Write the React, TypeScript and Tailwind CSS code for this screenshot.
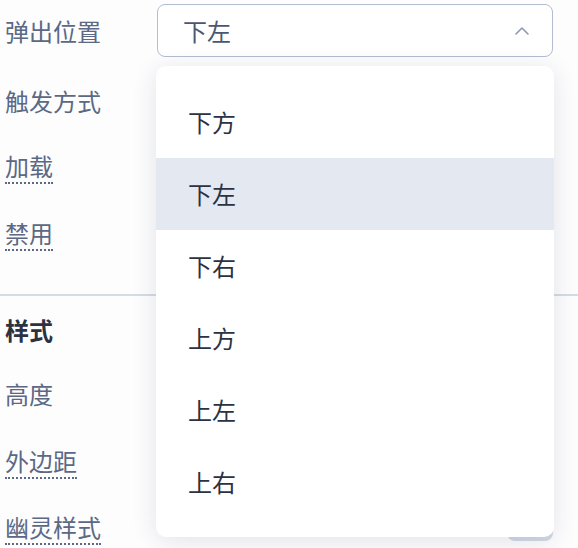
const options = ["下方", "下左", "下右", "上方", "上左", "上右"]

const Label = ({ text, dotted }: { text: string; dotted?: boolean }) => (
  <span
    className={
      dotted
        ? "inline-block self-start ml-[5px] h-[34px] text-[24px] leading-[32px] text-[#5b6985] border-b-2 border-dotted border-[#5b6985]"
        : "inline-block self-start ml-[5px] h-[32px] text-[24px] leading-[32px] text-[#5b6985]"
    }
  >
    {text}
  </span>
)

export default function App() {
  const selected = "下左"

  return (
    <div
      className="relative w-[578px] h-[548px] overflow-hidden bg-[#fdfdfe]"
      style={{ fontFamily: '"Noto Sans CJK SC", "Noto Sans", sans-serif' }}
    >
      <div className="flex flex-col">
        <div className="mt-[4px] flex h-[53px] items-center pr-[25px]">
          <span className="ml-[5px] w-[152px] text-[24px] leading-[32px] text-[#5b6985]">弹出位置</span>
          <div className="flex h-[53px] flex-1 items-center justify-between rounded-[8px] border-[1.5px] border-[#b3bdd1] bg-white pl-[25px] pr-[22px]">
            <span className="text-[24px] leading-[32px] text-[#4a5772]">{selected}</span>
            <svg width="16" height="10" viewBox="0 0 16 10" fill="none">
              <path d="M2 8 L8 2 L14 8" stroke="#8c99b0" strokeWidth="1.6" strokeLinecap="round" strokeLinejoin="round" />
            </svg>
          </div>
        </div>

        <div className="mt-[28px] flex">
          <Label text="触发方式" />
        </div>
        <div className="mt-[33px] flex">
          <Label text="加载" dotted />
        </div>
        <div className="mt-[33px] flex">
          <Label text="禁用" dotted />
        </div>

        <div className="mt-[43px] h-[2px] w-full bg-[#d5dae6]" />

        <div className="mt-[18px] flex">
          <span className="ml-[5px] h-[32px] text-[24px] font-bold leading-[32px] text-[#2b3242]">样式</span>
        </div>
        <div className="mt-[32px] flex">
          <Label text="高度" />
        </div>
        <div className="mt-[35px] flex">
          <Label text="外边距" dotted />
        </div>
        <div className="mt-[32px] flex items-start justify-between pr-[25px]">
          <Label text="幽灵样式" dotted />
          <div className="h-[30px] w-[46px] rounded-[8px] bg-[#d3d9e5]" />
        </div>
      </div>

      <div className="absolute left-[156px] top-[66px] h-[471px] w-[398px] rounded-[10px] bg-white py-[20px] shadow-[0_4px_24px_rgba(30,40,70,0.12)]">
        {options.map((o) => (
          <div
            key={o}
            className={
              o === selected
                ? "flex h-[72px] items-center bg-[#e4e8f1] pl-[32px] text-[24px] text-[#2b3242]"
                : "flex h-[72px] items-center pl-[32px] text-[24px] text-[#2b3242]"
            }
          >
            {o}
          </div>
        ))}
      </div>
    </div>
  )
}
